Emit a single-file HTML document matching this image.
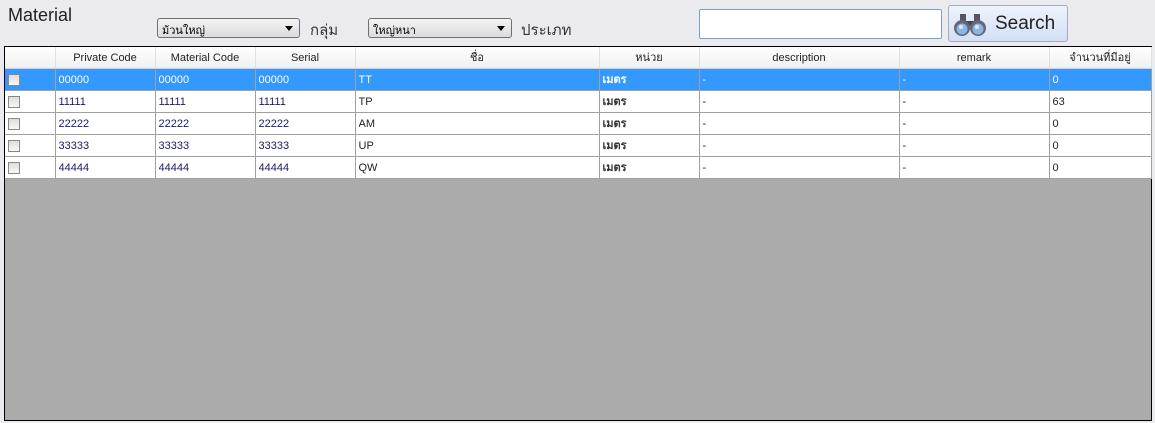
<!DOCTYPE html>
<html><head><meta charset="utf-8"><style>
body{margin:0;width:1155px;height:423px;background:#ebebef;font-family:"Liberation Sans","Noto Sans CJK SC",sans-serif;position:relative;overflow:hidden}
.a{position:absolute}
.title{left:8px;top:5px;font-size:18px;color:#222}
.sel{height:20px;border:1px solid #707070;border-radius:3px;background:linear-gradient(#f4f4f4,#dcdcdc);font-size:11px;box-sizing:border-box;padding:2px 4px;color:#000}
.sel:after{content:"";position:absolute;right:6px;top:7px;border:4px solid transparent;border-top:5px solid #000}
.lbl{font-size:15px;color:#333}
.grid{left:4px;top:46px;width:1148px;height:375px;border:1px solid #000;box-sizing:border-box;background:#ababab}
table{border-collapse:collapse;table-layout:fixed;width:1146px;font-size:11px;position:absolute;left:0;top:0}
td,th{height:21px;line-height:21px;padding:0 3px;border-right:1px solid #a0a0a0;border-bottom:1px solid #a0a0a0;white-space:nowrap;overflow:hidden;text-align:left;background:#fff;color:#222;font-weight:normal}
td div,th div{height:21px;line-height:22px;overflow:hidden}
th{background:linear-gradient(#fff,#f0f0f0);text-align:center;border-bottom:1px solid #d0d0d0;border-right:1px solid #e0e0e0;color:#222}
tr.s td{background:#3399ff;color:#fff}
td.n{color:#1a1a6a}
td.u{font-weight:bold;color:#333}
tr.s td.u{color:#fff}
.cb{display:inline-block;width:10px;height:10px;border:1px solid #888;background:linear-gradient(#ddd,#f8f8f8);vertical-align:middle}
</style></head><body>
<div class="a title">Material</div>
<div class="a sel" style="left:157px;top:18px;width:143px">ม้วนใหญ่</div>
<div class="a lbl" style="left:310px;top:18px">กลุ่ม</div>
<div class="a sel" style="left:368px;top:18px;width:144px">ใหญ่หนา</div>
<div class="a lbl" style="left:521px;top:18px">ประเภท</div>
<div class="a" style="left:699px;top:9px;width:243px;height:30px;border:1px solid #7aa0c8;border-radius:2px;background:#fff;box-sizing:border-box"></div>
<div class="a" style="left:948px;top:5px;width:120px;height:37px;border:1px solid #aab;border-radius:3px;background:linear-gradient(#eef3fc,#d3dff5);box-sizing:border-box">
<svg class="a" style="left:4px;top:6px" width="34" height="26" viewBox="0 0 34 26"><rect x="7" y="2" width="6" height="8" fill="#556"/><rect x="21" y="2" width="6" height="8" fill="#556"/><rect x="13" y="9" width="8" height="5" fill="#445"/><circle cx="9" cy="16" r="8" fill="#667"/><circle cx="25" cy="16" r="8" fill="#667"/><circle cx="9" cy="17" r="5.5" fill="#8ab6e6"/><circle cx="25" cy="17" r="5.5" fill="#8ab6e6"/><circle cx="8" cy="15" r="2" fill="#dceaff"/><circle cx="24" cy="15" r="2" fill="#dceaff"/></svg>
<span class="a" style="left:46px;top:7px;font-size:19px;color:#222">Search</span></div>
<div class="a grid"><table>
<colgroup><col style="width:50px"><col style="width:100px"><col style="width:100px"><col style="width:100px"><col style="width:244px"><col style="width:100px"><col style="width:200px"><col style="width:150px"><col style="width:102px"></colgroup>
<tr><th><div></div></th><th><div>Private Code</div></th><th><div>Material Code</div></th><th><div>Serial</div></th><th><div>ชื่อ</div></th><th><div>หน่วย</div></th><th><div>description</div></th><th><div>remark</div></th><th><div>จำนวนที่มีอยู่</div></th></tr>
<tr class="s"><td><div><span class="cb"></span></div></td><td><div>00000</div></td><td><div>00000</div></td><td><div>00000</div></td><td><div>TT</div></td><td class="u"><div>เมตร</div></td><td><div>-</div></td><td><div>-</div></td><td><div>0</div></td></tr>
<tr><td><div><span class="cb"></span></div></td><td class="n"><div>11111</div></td><td class="n"><div>11111</div></td><td class="n"><div>11111</div></td><td><div>TP</div></td><td class="u"><div>เมตร</div></td><td><div>-</div></td><td><div>-</div></td><td><div>63</div></td></tr>
<tr><td><div><span class="cb"></span></div></td><td class="n"><div>22222</div></td><td class="n"><div>22222</div></td><td class="n"><div>22222</div></td><td><div>AM</div></td><td class="u"><div>เมตร</div></td><td><div>-</div></td><td><div>-</div></td><td><div>0</div></td></tr>
<tr><td><div><span class="cb"></span></div></td><td class="n"><div>33333</div></td><td class="n"><div>33333</div></td><td class="n"><div>33333</div></td><td><div>UP</div></td><td class="u"><div>เมตร</div></td><td><div>-</div></td><td><div>-</div></td><td><div>0</div></td></tr>
<tr><td><div><span class="cb"></span></div></td><td class="n"><div>44444</div></td><td class="n"><div>44444</div></td><td class="n"><div>44444</div></td><td><div>QW</div></td><td class="u"><div>เมตร</div></td><td><div>-</div></td><td><div>-</div></td><td><div>0</div></td></tr>
</table></div>
</body></html>
